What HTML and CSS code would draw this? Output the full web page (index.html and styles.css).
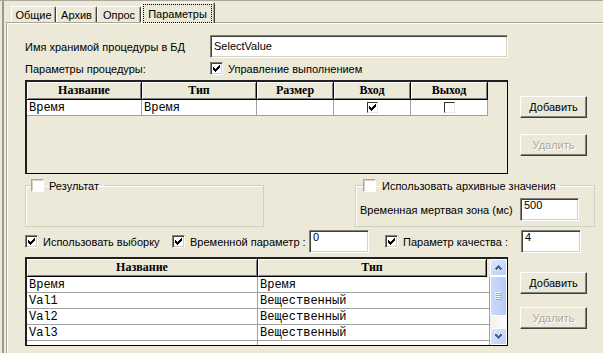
FILE: index.html
```html
<!DOCTYPE html>
<html lang="ru">

<head>
    <meta charset="UTF-8">
    <title>Параметры</title>
    <link rel="stylesheet" href="styles.css">
</head>

<body>
    <div class="window">
        <div class="tabs">
            <div class="tab t1">Общие</div>
            <div class="tab t2">Архив</div>
            <div class="tab t3">Опрос</div>
            <div class="tab active"><span class="focus">Параметры</span></div>
        </div>
        <div class="panel">
            <div class="name-row">
                <span class="lbl">Имя хранимой процедуры в БД</span>
                <div class="edit name-edit">SelectValue</div>
            </div>
            <div class="params-row">
                <span class="lbl">Параметры процедуры:</span>
                <span class="cbl">
                    <span class="cb"><svg width="9" height="9" viewBox="0 0 9 9"><path d="M1 3h1v3H1zM2 4h1v3H2zM3 5h1v3H3zM4 4h1v3H4zM5 3h1v3H5zM6 2h1v3H6zM7 1h1v3H7z"/></svg></span>
                    Управление выполнением
                </span>
            </div>

            <!-- параметры процедуры -->
            <div class="grid-row">
                <div class="grid grid1">
                    <div class="ghead">
                        <div class="hc">Название</div>
                        <div class="hc">Тип</div>
                        <div class="hc">Размер</div>
                        <div class="hc">Вход</div>
                        <div class="hc">Выход</div>
                    </div>
                    <div class="grow">
                        <div class="gc">Время</div>
                        <div class="gc">Время</div>
                        <div class="gc"></div>
                        <div class="gc mid"><span class="scb"><svg width="9" height="9" viewBox="0 0 9 9"><path d="M1 3h1v3H1zM2 4h1v3H2zM3 5h1v3H3zM4 4h1v3H4zM5 3h1v3H5zM6 2h1v3H6zM7 1h1v3H7z"/></svg></span></div>
                        <div class="gc mid"><span class="scb"></span></div>
                    </div>
                </div>
                <div class="buttons first">
                    <div class="btn">Добавить</div>
                    <div class="btn off">Удалить</div>
                </div>
            </div>

            <div class="groups">
                <fieldset class="group g1">
                    <legend><span class="cb light"></span>Результат</legend>
                </fieldset>
                <fieldset class="group g2">
                    <legend><span class="cb light"></span>Использовать архивные значения</legend>
                    <div class="dz-row">
                        <span class="dz-label">Временная мертвая зона (мс)</span>
                        <div class="edit dz-edit">500</div>
                    </div>
                </fieldset>
            </div>

            <div class="opts">
                <span class="cbl opt1">
                    <span class="cb"><svg width="9" height="9" viewBox="0 0 9 9"><path d="M1 3h1v3H1zM2 4h1v3H2zM3 5h1v3H3zM4 4h1v3H4zM5 3h1v3H5zM6 2h1v3H6zM7 1h1v3H7z"/></svg></span>
                    Использовать выборку
                </span>
                <span class="cbl opt2">
                    <span class="cb"><svg width="9" height="9" viewBox="0 0 9 9"><path d="M1 3h1v3H1zM2 4h1v3H2zM3 5h1v3H3zM4 4h1v3H4zM5 3h1v3H5zM6 2h1v3H6zM7 1h1v3H7z"/></svg></span>
                    Временной параметр :
                </span>
                <div class="edit small-edit">0</div>
                <span class="cbl opt3">
                    <span class="cb"><svg width="9" height="9" viewBox="0 0 9 9"><path d="M1 3h1v3H1zM2 4h1v3H2zM3 5h1v3H3zM4 4h1v3H4zM5 3h1v3H5zM6 2h1v3H6zM7 1h1v3H7z"/></svg></span>
                    Параметр качества :
                </span>
                <div class="edit small-edit">4</div>
            </div>

            <!-- выборка -->
            <div class="grid-row second">
                <div class="grid grid2">
                    <div class="gbody">
                        <div class="ghead">
                            <div class="hc">Название</div>
                            <div class="hc">Тип</div>
                        </div>
                        <div class="grow">
                            <div class="gc">Время</div>
                            <div class="gc">Время</div>
                        </div>
                        <div class="grow">
                            <div class="gc">Val1</div>
                            <div class="gc">Вещественный</div>
                        </div>
                        <div class="grow">
                            <div class="gc">Val2</div>
                            <div class="gc">Вещественный</div>
                        </div>
                        <div class="grow">
                            <div class="gc">Val3</div>
                            <div class="gc">Вещественный</div>
                        </div>
                        <div class="grow">
                            <div class="gc"></div>
                            <div class="gc"></div>
                        </div>
                    </div>
                    <div class="vscroll">
                        <div class="sb-btn"><svg width="7" height="5" viewBox="0 0 7 5"><polyline points="0.5,4.5 3.5,1.5 6.5,4.5" fill="none" stroke="#4d6185" stroke-width="2"/></svg></div>
                        <div class="sb-thumb"><svg width="7" height="8" viewBox="0 0 7 8"><path d="M0 0h6v1H0zM0 2h6v1H0zM0 4h6v1H0zM0 6h6v1H0z" fill="#eef4fe"/><path d="M1 1h6v1H1zM1 3h6v1H1zM1 5h6v1H1zM1 7h6v1H1z" fill="#8cabef"/></svg></div>
                        <div class="sb-track"></div>
                        <div class="sb-btn"><svg width="7" height="5" viewBox="0 0 7 5"><polyline points="0.5,0.5 3.5,3.5 6.5,0.5" fill="none" stroke="#4d6185" stroke-width="2"/></svg></div>
                    </div>
                </div>
                <div class="buttons">
                    <div class="btn">Добавить</div>
                    <div class="btn off">Удалить</div>
                </div>
            </div>
        </div>
    </div>
</body>

</html>
```

FILE: styles.css
```css
body {
    margin: 0;
    font-family: "Liberation Sans", Arial, sans-serif;
    font-size: 11px;
    color: #000;
}

.window {
    width: 603px;
    height: 353px;
    box-sizing: border-box;
    background: #ece9d8;
    border-top: 1px solid #aca899;
    box-shadow: inset 2px 0 0 #ece9d8, inset 4px 0 0 #9d9a8a;
    overflow: hidden;
    display: flex;
    flex-direction: column;
}

/* вкладки */
.tabs {
    display: flex;
    align-items: flex-end;
    height: 21px;
    padding-left: 11px;
}

.tab {
    box-sizing: border-box;
    height: 16px;
    border: 1px solid;
    border-color: #fff #404040 #fff #fff;
    border-bottom: 0;
    border-radius: 2px 2px 0 0;
    box-shadow: inset -1px 0 0 #aca899;
    display: flex;
    align-items: center;
    justify-content: center;
}

.t1 {
    width: 45px;
}

.t2 {
    width: 41px;
}

.t3 {
    width: 44px;
}

.tab.active {
    width: 74px;
    height: 21px;
    margin-bottom: -1px;
    padding: 1px 2px 0 1px;
    background: #ece9d8;
    position: relative;
    z-index: 1;
}

.focus {
    flex: 1;
    align-self: stretch;
    border: 1px dotted #000;
    display: flex;
    align-items: center;
    justify-content: center;
}

.panel {
    flex: 1;
    margin-left: 6px;
    border-top: 1px solid #aca899;
    border-left: 1px solid #aca899;
    box-shadow: inset 1px 1px 0 #fff;
    padding: 12px 0 0 18px;
}

.lbl {
    width: 185px;
}

.name-row {
    display: flex;
    align-items: center;
    height: 23px;
}

.edit {
    box-sizing: border-box;
    height: 23px;
    border: 1px solid;
    border-color: #808080 #fff #fff #808080;
    box-shadow: inset 1px 1px 0 #404040, inset -1px -1px 0 #d4d0c8;
    background: #fff;
    padding: 0 3px;
    line-height: 13px;
}

.name-edit {
    width: 298px;
    padding-top: 4px;
}

.params-row {
    display: flex;
    align-items: center;
    height: 13px;
    margin-top: 4px;
}

.cbl {
    display: flex;
    align-items: center;
    gap: 5px;
}

.cb {
    box-sizing: border-box;
    width: 13px;
    height: 13px;
    flex: none;
    border: 1px solid;
    border-color: #808080 #fff #fff #808080;
    box-shadow: inset 1px 1px 0 #404040, inset -1px -1px 0 #d4d0c8;
    background: #fff;
    padding: 1px;
    display: flex;
}

.cb.light {
    border-color: #aca899 #fff #fff #aca899;
    box-shadow: inset 1px 1px 0 #d4d0c8;
}

svg {
    shape-rendering: crispEdges;
}

/* таблицы */
.grid-row {
    display: flex;
    margin-top: 5px;
}

.grid {
    box-sizing: border-box;
    width: 483px;
    border-style: solid;
    border-width: 2px 1px 1px 2px;
    border-color: #202020 #000 #000 #202020;
    background: #ece9d8;
}

.grid1 {
    height: 94px;
}

.grid1 .ghead,
.grid1 .grow {
    display: grid;
    grid-template-columns: 115px 115px 77px 77px 77px;
}

.hc {
    box-sizing: border-box;
    height: 18px;
    border-right: 1px solid #000;
    border-bottom: 1px solid #000;
    box-shadow: inset 1px 1px 0 #fff, inset -1px -1px 0 #808080;
    font-family: "Liberation Serif", serif;
    font-weight: bold;
    font-size: 12px;
    display: flex;
    align-items: center;
    justify-content: center;
}

.gc {
    box-sizing: border-box;
    height: 16px;
    border-right: 1px solid #a0a0a0;
    border-bottom: 1px solid #a0a0a0;
    background: #fff;
    font-family: "Liberation Mono", monospace;
    font-size: 12px;
    padding-left: 2px;
    display: flex;
    align-items: center;
}

.gc.mid {
    justify-content: center;
    padding-left: 0;
}

.scb {
    box-sizing: border-box;
    width: 11px;
    height: 11px;
    border: 1px solid;
    border-color: #303030 #e8e8e8 #e8e8e8 #303030;
    display: flex;
}

.buttons {
    margin-left: 12px;
    padding-top: 15px;
    display: flex;
    flex-direction: column;
    gap: 13px;
}

.buttons.first {
    padding-top: 16px;
    gap: 16px;
}

.btn {
    box-sizing: border-box;
    width: 67px;
    height: 22px;
    border: 1px solid;
    border-color: #fff #404040 #404040 #fff;
    box-shadow: inset -1px -1px 0 #808080;
    display: flex;
    align-items: center;
    justify-content: center;
}

.btn.off {
    color: #aca899;
    text-shadow: 1px 1px 0 #fff;
}

/* группы */
.groups {
    display: flex;
    gap: 91px;
    margin-top: 5px;
}

.group {
    margin: 0;
    padding: 0 4px 5px;
    border: 1px solid #d0d0bf;
    box-shadow: inset 1px 1px 0 #fff;
}

.group legend {
    display: flex;
    align-items: center;
    gap: 5px;
    height: 13px;
    padding: 0 5px 0 0;
}

.g1 {
    width: 239px;
    box-sizing: border-box;
}

.g1 legend {
    margin-left: 1px;
}

.g2 {
    width: 240px;
    box-sizing: border-box;
}

.g2 legend {
    margin-left: 3px;
    gap: 6px;
}

.dz-row {
    display: flex;
    align-items: center;
    margin-top: 6px;
}

.dz-label {
    width: 160px;
}

.dz-edit {
    width: 59px;
}

.opts {
    display: flex;
    align-items: center;
    height: 23px;
    margin-top: 3px;
}

.opt1 {
    width: 147px;
}

.opt2 {
    width: 137px;
}

.opt3 {
    width: 136px;
    margin-left: 16px;
}

.small-edit {
    width: 60px;
}

.grid-row.second {
    margin-top: 4px;
}

.grid2 {
    height: 89px;
    display: flex;
}

.gbody {
    width: 463px;
    overflow: hidden;
}

.grid2 .ghead {
    display: grid;
    grid-template-columns: 231px 229px;
}

.grid2 .grow {
    display: grid;
    grid-template-columns: 231px 232px;
}

.vscroll {
    width: 17px;
    display: flex;
    flex-direction: column;
    background: linear-gradient(to right, #f3f1ec, #fefefb);
}

.sb-btn {
    box-sizing: border-box;
    height: 17px;
    border: 1px solid #fff;
    border-radius: 2px;
    background: linear-gradient(135deg, #dde8fe, #b9cdf8);
    display: flex;
    align-items: center;
    justify-content: center;
}

.sb-thumb {
    box-sizing: border-box;
    height: 40px;
    border: 1px solid #fff;
    border-radius: 2px;
    background: linear-gradient(to right, #cbd9fc, #b6c9f6);
    display: flex;
    align-items: center;
    justify-content: center;
}

.sb-track {
    flex: 1;
}
```
